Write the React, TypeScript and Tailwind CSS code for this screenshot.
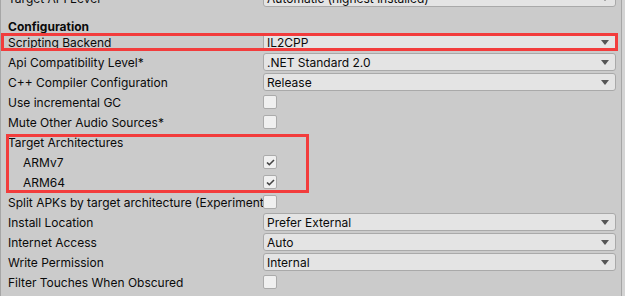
import React from 'react';

type Row =
  | { kind: 'dropdown'; label: string; value: string; indent?: boolean }
  | { kind: 'check'; label: string; checked?: boolean; indent?: boolean }
  | { kind: 'label'; label: string };

const rows: Row[] = [
  { kind: 'dropdown', label: 'Scripting Backend', value: 'IL2CPP' },
  { kind: 'dropdown', label: 'Api Compatibility Level*', value: '.NET Standard 2.0' },
  { kind: 'dropdown', label: 'C++ Compiler Configuration', value: 'Release' },
  { kind: 'check', label: 'Use incremental GC' },
  { kind: 'check', label: 'Mute Other Audio Sources*' },
  { kind: 'label', label: 'Target Architectures' },
  { kind: 'check', label: 'ARMv7', checked: true, indent: true },
  { kind: 'check', label: 'ARM64', checked: true, indent: true },
  { kind: 'check', label: 'Split APKs by target architecture (Experimental)' },
  { kind: 'dropdown', label: 'Install Location', value: 'Prefer External' },
  { kind: 'dropdown', label: 'Internet Access', value: 'Auto' },
  { kind: 'dropdown', label: 'Write Permission', value: 'Internal' },
  { kind: 'check', label: 'Filter Touches When Obscured' },
];

function Dropdown({ value }: { value: string }) {
  return (
    <div className="flex h-[18px] w-[353px] items-center justify-between rounded-[3px] border border-[#a9a9a9] bg-[#e4e4e4] pl-[3px] pr-[6px]">
      <span className="whitespace-nowrap pt-[1px]">{value}</span>
      <svg width="8" height="5" viewBox="0 0 8 5" className="mt-[1px]">
        <path d="M0 0 L8 0 L4 5 Z" fill="#555" />
      </svg>
    </div>
  );
}

function Checkbox({ checked }: { checked?: boolean }) {
  return (
    <div className="flex h-[14px] w-[14px] items-center justify-center rounded-[2px] border border-[#ababab] bg-[#f0f0f0]">
      {checked && (
        <svg width="9" height="7" viewBox="0 0 9 7">
          <path d="M1 3.5 L3.3 5.7 L8 1" fill="none" stroke="#444" strokeWidth="1.6" />
        </svg>
      )}
    </div>
  );
}

export default function App() {
  return (
    <div
      className="relative flex h-[296px] w-[625px] overflow-hidden bg-[#cbcbcb] text-[12px] text-[#0a0a0a]"
      style={{ fontFamily: 'Inter, "Noto Sans", sans-serif' }}
    >
      <div className="w-[622px] border-l border-r border-[#a6a6a6] bg-[#cbcbcb]">
        <div className="-mt-[12px]">
          {/* partially visible row above */}
          <div className="flex h-[20px] items-center">
            <div className="w-[262px] overflow-hidden whitespace-nowrap pl-[7px] pt-[2px]">Target API Level</div>
            <Dropdown value="Automatic (highest installed)" />
          </div>

          <div className="flex h-[24px] items-center pl-[7px] pt-[14px] font-bold">Configuration</div>

          {rows.map((row) => (
            <div key={row.label} className="flex h-[20px] items-center">
              <div
                className={`w-[262px] overflow-hidden whitespace-nowrap pt-[2px] ${row.kind !== 'label' && row.indent ? 'pl-[22px]' : 'pl-[7px]'}`}
              >
                {row.label}
              </div>
              {row.kind === 'dropdown' && <Dropdown value={row.value} />}
              {row.kind === 'check' && <Checkbox checked={row.checked} />}
            </div>
          ))}
        </div>
      </div>
      <div className="flex-1 bg-[#d4d4d4]" />

      {/* highlight boxes */}
      <div className="absolute left-[1px] top-[33px] h-[18px] w-[617px] border-[3px] border-[#f23c3c]" />
      <div className="absolute left-[6px] top-[134px] h-[59px] w-[303px] border-[3px] border-[#f23c3c]" />
    </div>
  );
}
